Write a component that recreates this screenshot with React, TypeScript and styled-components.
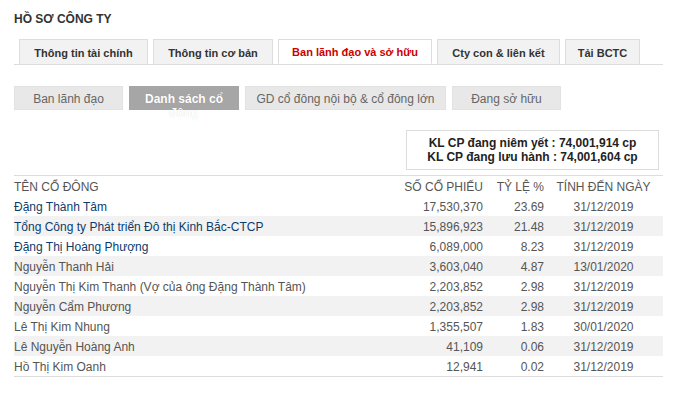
import React from "react";
import styled, { createGlobalStyle } from "styled-components";

interface Holder {
  name: string;
  shares: string;
  ratio: string;
  date: string;
  linked?: boolean;
}

const TABS = [
  { label: "Thông tin tài chính", width: 129 },
  { label: "Thông tin cơ bản", width: 120 },
  { label: "Ban lãnh đạo và sở hữu", width: 154 },
  { label: "Cty con & liên kết", width: 123 },
  { label: "Tải BCTC", width: 75 },
];

const SUB_TABS = [
  { label: "Ban lãnh đạo", width: 109 },
  { label: "Danh sách cổ đông", width: 110 },
  { label: "GD cổ đông nội bộ & cổ đông lớn", width: 201 },
  { label: "Đang sở hữu", width: 109 },
];

const HOLDERS: Holder[] = [
  { name: "Đặng Thành Tâm", shares: "17,530,370", ratio: "23.69", date: "31/12/2019", linked: true },
  { name: "Tổng Công ty Phát triển Đô thị Kinh Bắc-CTCP", shares: "15,896,923", ratio: "21.48", date: "31/12/2019", linked: true },
  { name: "Đặng Thị Hoàng Phượng", shares: "6,089,000", ratio: "8.23", date: "31/12/2019", linked: true },
  { name: "Nguyễn Thanh Hải", shares: "3,603,040", ratio: "4.87", date: "13/01/2020" },
  { name: "Nguyễn Thị Kim Thanh (Vợ của ông Đặng Thành Tâm)", shares: "2,203,852", ratio: "2.98", date: "31/12/2019" },
  { name: "Nguyễn Cẩm Phương", shares: "2,203,852", ratio: "2.98", date: "31/12/2019" },
  { name: "Lê Thị Kim Nhung", shares: "1,355,507", ratio: "1.83", date: "30/01/2020" },
  { name: "Lê Nguyễn Hoàng Anh", shares: "41,109", ratio: "0.06", date: "31/12/2019" },
  { name: "Hồ Thị Kim Oanh", shares: "12,941", ratio: "0.02", date: "31/12/2019" },
];

export default function App() {
  return (
    <>
      <GlobalStyle />
      <Page>
        <Title>HỒ SƠ CÔNG TY</Title>
        <TabBar>
          {TABS.map((t, i) => (
            <Tab key={t.label} active={i === 2} w={t.width}>
              {t.label}
            </Tab>
          ))}
        </TabBar>
        <SubBar>
          {SUB_TABS.map((s, i) => (
            <SubTab key={s.label} active={i === 1} w={s.width}>
              {s.label}
            </SubTab>
          ))}
        </SubBar>
        <InfoRow>
          <InfoBox>
            <div>KL CP đang niêm yết : 74,001,914 cp</div>
            <div>KL CP đang lưu hành : 74,001,604 cp</div>
          </InfoBox>
        </InfoRow>
        <Table>
          <thead>
            <tr>
              <Th>TÊN CỔ ĐÔNG</Th>
              <Th align="right">SỐ CỔ PHIẾU</Th>
              <Th align="right">TỶ LỆ %</Th>
              <Th align="center">TÍNH ĐẾN NGÀY</Th>
            </tr>
          </thead>
          <tbody>
            {HOLDERS.map((h, i) => (
              <Row key={h.name + i} shaded={i % 2 === 1}>
                <NameCell linked={h.linked}>{h.name}</NameCell>
                <Td align="right">{h.shares}</Td>
                <Td align="right">{h.ratio}</Td>
                <Td align="center">{h.date}</Td>
              </Row>
            ))}
          </tbody>
        </Table>
      </Page>
    </>
  );
}

const GlobalStyle = createGlobalStyle`
  body {
    margin: 0;
    background: #fff;
    font-family: "Liberation Sans", Arial, sans-serif;
    font-size: 12px;
    color: #333;
  }
`;

const Page = styled.div`
  width: 649px;
  padding: 12px 0 0 14px;
`;

const Title = styled.div`
  font-weight: bold;
  font-size: 12px;
  line-height: 14px;
  color: #333;
`;

const TabBar = styled.div`
  display: flex;
  gap: 5px;
  margin-top: 13px;
  padding-left: 5px;
  border-bottom: 1px solid #ddd;
  height: 25px;
`;

const Tab = styled.div<{ active?: boolean; w: number }>`
  box-sizing: border-box;
  display: flex;
  align-items: center;
  justify-content: center;
  width: ${(p) => p.w}px;
  height: 25px;
  padding-top: 1px;
  border: 1px solid #ddd;
  border-bottom: ${(p) => (p.active ? "1px solid #fff" : "none")};
  background: ${(p) => (p.active ? "#fff" : "#f2f2f2")};
  color: ${(p) => (p.active ? "#cc0000" : "#333")};
  font-size: 11px;
  font-weight: bold;
  white-space: nowrap;
`;

const SubBar = styled.div`
  display: flex;
  gap: 6px;
  margin-top: 21px;
`;

const SubTab = styled.div<{ active?: boolean; w: number }>`
  box-sizing: border-box;
  width: ${(p) => p.w}px;
  height: 24px;
  padding-top: 5px;
  line-height: 14px;
  text-align: center;
  border: 1px solid ${(p) => (p.active ? "#a6a6a6" : "#e2e2e2")};
  background: ${(p) => (p.active ? "#a6a6a6" : "#e8e8e8")};
  color: ${(p) => (p.active ? "#fff" : "#666")};
  font-weight: ${(p) => (p.active ? "bold" : "normal")};
  text-shadow: ${(p) => (p.active ? "0 0 1px rgba(0,0,0,0.15)" : "none")};
`;

const InfoRow = styled.div`
  display: flex;
  justify-content: flex-end;
  padding-right: 4px;
  margin-top: 20px;
`;

const InfoBox = styled.div`
  box-sizing: border-box;
  width: 253px;
  height: 40px;
  padding-top: 5px;
  border: 1px solid #ddd;
  text-align: center;
  font-weight: bold;
  line-height: 14px;
  color: #222;
`;

const Table = styled.table`
  width: 649px;
  margin-top: 5px;
  border-collapse: collapse;
  border-top: 1px solid #ddd;
  border-bottom: 1px solid #ddd;
  table-layout: fixed;
`;

const Th = styled.th<{ align?: string }>`
  height: 19px;
  padding: 1px 0 0;
  font-weight: normal;
  color: #555;
  text-align: ${(p) => p.align || "left"};
  white-space: nowrap;

  &:nth-child(1) {
    width: 381px;
  }
  &:nth-child(2) {
    width: 88px;
  }
  &:nth-child(3) {
    width: 61px;
  }
`;

const Row = styled.tr<{ shaded?: boolean }>`
  height: 20px;
  background: ${(p) => (p.shaded ? "#f2f2f2" : "#fff")};
`;

const Td = styled.td<{ align?: string }>`
  padding: 1px 0 0;
  height: 19px;
  color: #555;
  text-align: ${(p) => p.align || "left"};
  white-space: nowrap;
`;

const NameCell = styled(Td)<{ linked?: boolean }>`
  color: ${(p) => (p.linked ? "#0d3c6a" : "#555")};
`;
